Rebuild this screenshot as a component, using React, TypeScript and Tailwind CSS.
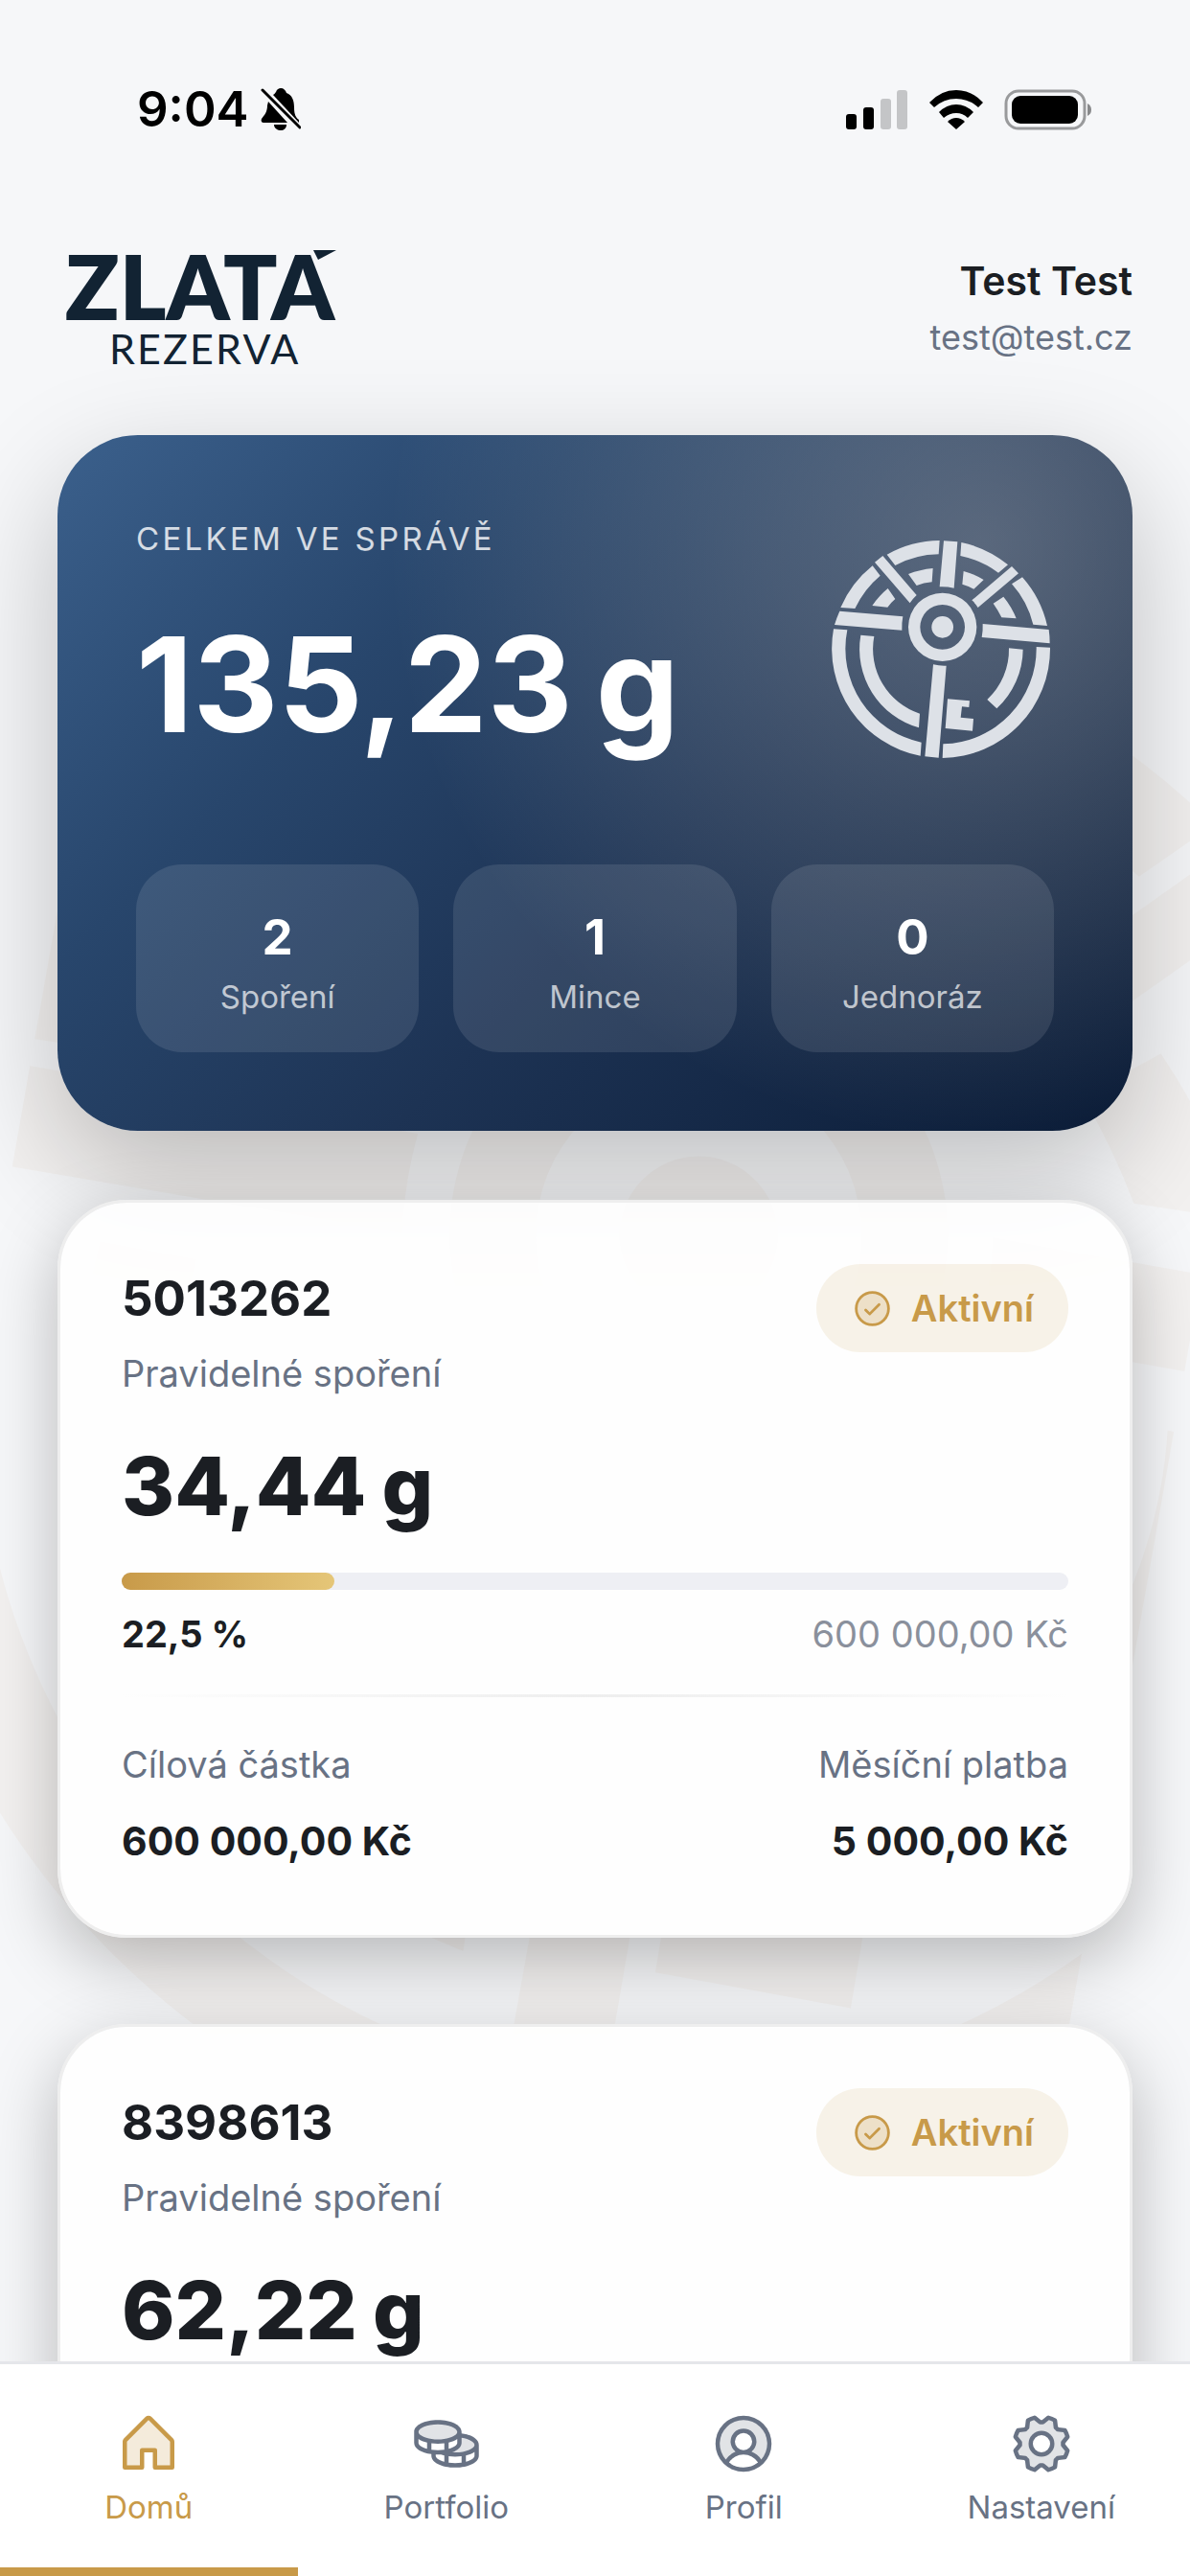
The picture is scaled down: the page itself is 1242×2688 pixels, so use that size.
import React from 'react';
import {
  PiCheckCircleDuotone,
  PiCoinsDuotone,
  PiGearDuotone,
  PiHouseDuotone,
  PiUserCircleDuotone,
} from 'react-icons/pi';

const stats = [
  { value: '2', label: 'Spoření' },
  { value: '1', label: 'Mince' },
  { value: '0', label: 'Jednoráz' },
];

const accounts = [
  { id: '5013262', type: 'Pravidelné spoření', grams: '34,44', percent: 22.5, percentLabel: '22,5 %', target: '600 000,00 Kč', monthly: '5 000,00 Kč' },
  { id: '8398613', type: 'Pravidelné spoření', grams: '62,22', percent: 40, percentLabel: '40,0 %', target: '600 000,00 Kč', monthly: '5 000,00 Kč' },
];

const tabs = [
  { label: 'Domů', icon: PiHouseDuotone, active: true },
  { label: 'Portfolio', icon: PiCoinsDuotone, active: false },
  { label: 'Profil', icon: PiUserCircleDuotone, active: false },
  { label: 'Nastavení', icon: PiGearDuotone, active: false },
];

const Emblem = ({ className }: { className: string }) => (
  <svg viewBox="70 92 708 708" fill="currentColor" className={className} aria-hidden="true">
    {/* Outer ring */}
    <path d="M255 148A342 342 0 0 1 420 104L417 147A299 299 0 0 0 281 182Z" />
    <path d="M488 110A342 342 0 0 1 634 180L604 205A299 299 0 0 0 485 152Z" />
    <path d="M110 314A342 342 0 0 1 210 183L234 214A299 299 0 0 0 155 317Z" />
    <path d="M679 219A342 342 0 0 1 757 371L713 367A299 299 0 0 0 646 240Z" />
    <path d="M88 381A342 342 0 0 0 360 778L363 736A299 299 0 0 1 131 384Z" />
    <path d="M766 439A342 342 0 0 1 429 785L431 741A299 299 0 0 0 723 437Z" />
    {/* Inner ring */}
    <path d="M322 209Q358 195 399 191L396 234Q370 236 348 245Z" />
    <path d="M495 200Q529 209 558 227L527 256Q509 246 491 241Z" />
    <path d="M258 254L281 287Q267 299 257 313L209 308Q230 277 258 254Z" />
    <path d="M620 280Q646 312 660 348L614 345Q603 322 588 301Z" />
    <path d="M173 400A256 256 0 0 0 355 690L358 646A213 213 0 0 1 215 404Z" />
    <path d="M681 445A256 256 0 0 1 599 630L569 602A213 213 0 0 0 637 441Z" />
    {/* Spokes */}
    <path d="M433 105L476 108L465 253Q443 248 420 249Z" />
    <path d="M217 172L242 152L348 275Q336 286 327 300Z" />
    <path d="M646 185L667 207L540 314Q532 301 521 291Z" />
    <path d="M107 325L305 342Q301 363 302 385L91 368Q98 345 107 325Z" />
    <path d="M555 365L762 383Q765 404 765 426L552 407Q556 386 555 365Z" />
    {/* Key */}
    <path d="M400 492Q420 497 441 496L417 784L374 780Z" />
    <path d="M445 600L514 606L512 626L490 624L486 658L526 662L523 700L438 692Z" />
    <path fillRule="evenodd" d="M429 268a107 107 0 1 0 0 214a107 107 0 1 0 0-214ZM429 305a70 70 0 1 1 0 140a70 70 0 1 1 0-140Z" />
    <circle cx="429" cy="375" r="34" />
  </svg>
);

const Logo = () => (
  <svg viewBox="0 0 290 120" className="h-[120px] w-[290px] overflow-visible fill-[#122333]" role="img" aria-label="Zlatá rezerva">
    <text x="8" y="73" fontFamily="Lato, sans-serif" fontSize="93" fontWeight="800">ZLATA</text>
    <path d="M267 0H291L272 10Z" />
    <text x="54" y="119" fontFamily="Lato, sans-serif" fontSize="43" className="tracking-wider">REZERVA</text>
  </svg>
);

const StatusBar = () => (
  <div className="flex h-[142px] items-end justify-between pl-[143px] pr-[102px]">
    <div className="flex h-14 items-center gap-3">
      <span className="text-[51px] font-semibold leading-[56px] text-black">9:04</span>
      <svg viewBox="0 0 42 46" className="h-[46px] w-[42px]" aria-label="Tichý režim">
        <path d="M21 1C24 1 26 3 27 6C33 8 35 14 35 21C35 29 37 32 40 34V37L13 8C15 7 15 6 16 5C17 2 19 1 21 1Z" />
        <path d="M8 15L28 37H3C1 37 0 35 1 33C4 29 7 26 7 19Z" />
        <path d="M14 39H27C27 43 24 45 21 45S14 43 14 39Z" />
        <path d="M2 3L41 42" stroke="black" strokeWidth="3" strokeLinecap="round" />
      </svg>
    </div>
    <div className="flex h-14 items-center gap-[22px]">
      <svg viewBox="0 0 65 41" className="h-[41px] w-[65px]" aria-label="Signál">
        <rect x="0" y="25" width="11" height="16" rx="3" />
        <rect x="18" y="18" width="11" height="23" rx="3" />
        <rect x="36" y="9" width="11" height="32" rx="3" fill="#c4c5c7" />
        <rect x="53" y="0" width="11" height="41" rx="3" fill="#c4c5c7" />
      </svg>
      <svg viewBox="0 0 56 41" className="h-[41px] w-14" aria-label="Wi-Fi">
        <path d="M0 13Q12 0 28 0T56 13L51 18Q41 9 28 9T5 18Z" />
        <path d="M10 23Q18 15 28 15T46 23L40 29Q35 24 28 24T15 29Z" />
        <path d="M19 33Q23 29 28 29T37 33L28 41Z" />
      </svg>
      <svg viewBox="0 0 92 43" className="h-[43px] w-[92px]" aria-label="Baterie">
        <rect x="2" y="2" width="82" height="39" rx="13" fill="none" stroke="#999a9c" strokeWidth="3" />
        <rect x="8" y="7" width="69" height="29" rx="9" />
        <path d="M87 15Q91 17 91 21.500T87 28Z" fill="#88898b" />
      </svg>
    </div>
  </div>
);

const SummaryCard = () => (
  <section className="rounded-[84px] bg-[radial-gradient(circle_620px_at_86%_16%,rgba(255,248,236,0.27),rgba(255,248,236,0.18)_35%,transparent),linear-gradient(135deg,#3b608c_0%,#28466c_30%,#1d3354_58%,#0a1b36_100%)] p-[82px] shadow-[0_42px_120px_rgba(0,0,0,0.23)]">
    <div className="flex items-start justify-between">
      <div>
        <h2 className="text-[33px] uppercase leading-[52px] tracking-widest text-white/80">Celkem ve správě</h2>
        <p className="mt-[54px] flex gap-6 text-[138px] font-bold leading-[144px] text-white">
          <span>135,23</span>
          <span>g</span>
        </p>
      </div>
      <Emblem className="mt-6 size-[236px] text-[#dde1e7]" />
    </div>
    <div className="mt-[106px] grid grid-cols-3 gap-9">
      {stats.map((stat) => (
        <div key={stat.label} className="rounded-[48px] bg-white/10 pb-[34px] pt-[46px] text-center">
          <p className="text-[51px] font-bold leading-[60px] text-white">{stat.value}</p>
          <p className="mt-2 text-[33px] leading-[48px] text-white/70">{stat.label}</p>
        </div>
      ))}
    </div>
  </section>
);

const AccountCard = ({ account }: { account: (typeof accounts)[number] }) => (
  <article className="rounded-[72px] border-[3px] border-[#eeeeee] bg-white/90 bg-clip-padding p-16 pb-[74px] text-[#1b1e23] shadow-[0_24px_72px_rgba(0,0,0,0.26)]">
    <div className="flex items-start justify-between">
      <div>
        <h3 className="text-[51px] font-bold leading-[72px]">{account.id}</h3>
        <p className="mt-3 text-[38px] leading-[60px] text-[#687284]">{account.type}</p>
      </div>
      <span className="flex h-[92px] items-center gap-[18px] rounded-full bg-[#c89a49]/12 px-9 text-[38px] font-semibold text-[#c89a49]">
        <PiCheckCircleDuotone className="size-[45px]" />
        Aktivní
      </span>
    </div>
    <p className="mt-10 flex gap-4 text-[84px] font-extrabold leading-[96px]">
      <span>{account.grams}</span>
      <span>g</span>
    </p>
    <div className="mt-[42px] h-[18px] rounded-full bg-[#eeeff4]">
      <div className="h-full rounded-full bg-linear-to-r from-[#c89a49] to-[#e5c678]" style={{ width: `${account.percent}%` }} />
    </div>
    <div className="mt-[22px] flex justify-between text-[38px] leading-[48px]">
      <span className="font-bold">{account.percentLabel}</span>
      <span className="text-[#8a909c]">{account.target}</span>
    </div>
    <div className="mt-[39px] h-[3px] bg-linear-to-r from-transparent via-[#eeeeee] to-transparent" />
    <dl className="mt-[46px] flex justify-between leading-[48px]">
      <div>
        <dt className="text-[38px] text-[#687284]">Cílová částka</dt>
        <dd className="mt-8 text-[41px] font-bold">{account.target}</dd>
      </div>
      <div className="text-right">
        <dt className="text-[38px] text-[#687284]">Měsíční platba</dt>
        <dd className="mt-8 text-[41px] font-bold">{account.monthly}</dd>
      </div>
    </dl>
  </article>
);

const TabBar = () => (
  <nav className="relative grid h-56 grid-cols-4 border-t-[3px] border-[#e5e6ea] bg-white">
    {tabs.map(({ label, icon: Icon, active }) => (
      <a
        key={label}
        href="#"
        className={`flex flex-col items-center border-b-[9px] pt-[47px] ${
          active ? 'border-[#c89a49] text-[#c89a49]' : 'border-transparent text-[#687284]'
        }`}
      >
        <Icon className="size-[72px]" />
        <span className="mt-3 text-[33px] leading-9">{label}</span>
      </a>
    ))}
  </nav>
);

const App = () => {
  return (
    <div className="relative flex h-screen flex-col overflow-hidden bg-[#f6f7f9] font-['Inter',sans-serif]">
      {/* Watermark */}
      <div className="absolute inset-0 flex rotate-10 items-center justify-center overflow-hidden">
        <Emblem className="size-[1720px] shrink-0 translate-x-[100px] translate-y-[100px] -rotate-5 text-[#c89a6a]/6" />
      </div>

      <div className="relative min-h-0 flex-1 overflow-hidden">
        <StatusBar />
        <header className="mt-[119px] flex items-center justify-between px-[60px]">
          <Logo />
          <div className="text-right">
            <p className="text-[41px] font-semibold leading-[54px] text-[#1b1e23]">Test Test</p>
            <p className="mt-2 text-[36px] leading-[48px] text-[#687284]">test@test.cz</p>
          </div>
        </header>
        <main className="mt-[73px] px-[60px]">
          <SummaryCard />
          <div className="mt-[72px] space-y-[90px]">
            {accounts.map((account) => (
              <AccountCard key={account.id} account={account} />
            ))}
          </div>
        </main>
      </div>

      <TabBar />
    </div>
  );
};

export default App;
